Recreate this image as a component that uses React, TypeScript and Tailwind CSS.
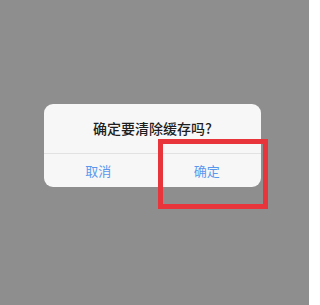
export default function App() {
  return (
    <div
      className="relative h-[305px] w-[309px] overflow-hidden bg-[#8e8e8e]"
      style={{ fontFamily: '"Noto Sans CJK SC", "Liberation Sans", sans-serif' }}
    >
      <div className="flex pt-[104px] pl-[44px]">
        <div className="w-[217px] overflow-hidden rounded-[9px] bg-[#f7f7f7]">
          <div className="flex h-[49px] items-center justify-center text-[14px] font-medium text-[#1e1e1e]">
            确定要清除缓存吗?
          </div>
          <div className="grid h-[34px] grid-cols-2 border-t border-[#e2e2e2] text-[13px] text-[#5a98ee]">
            <div className="flex items-center justify-center">取消</div>
            <div className="flex items-center justify-center">确定</div>
          </div>
        </div>
      </div>
      <div className="absolute left-[158px] top-[139px] h-[70px] w-[110px] border-[5px] border-[#e8353b]" />
    </div>
  );
}
